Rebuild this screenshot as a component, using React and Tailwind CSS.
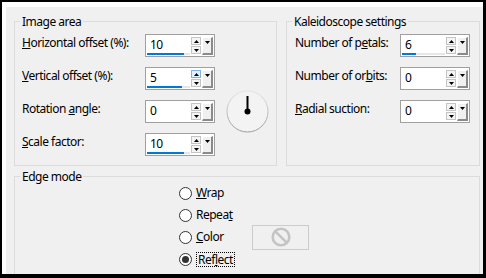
import React from 'react';

const Up = () => (
  <svg width="5" height="3" viewBox="0 0 5 3"><path d="M0 3 L2.5 0 L5 3 Z" fill="#000" /></svg>
);
const Down = () => (
  <svg width="5" height="3" viewBox="0 0 5 3"><path d="M0 0 L5 0 L2.5 3 Z" fill="#000" /></svg>
);

function SpinBox({ value, bar = 0, hot = false }) {
  return (
    <div className="flex h-[23px] w-[70px] items-center border border-[#a0a0a0] bg-white pr-[1px]">
      <div className="flex h-full w-[45px] flex-col pl-[1px] pt-[2px]">
        <div className="h-[16px] pl-[3px] leading-[16px]">{value}</div>
        {bar > 0 && (
          <div className="h-[2px] w-[43px] bg-[#e6e6e6]">
            <div className="h-full bg-[#0078d7]" style={{ width: bar }} />
          </div>
        )}
      </div>
      <div className="flex w-[10px] flex-col gap-[1px]">
        <div className={`flex h-[8px] items-center justify-center border ${hot ? 'border-[#7eb4ea] bg-[#e5f1fb]' : 'border-[#c4c4c4] bg-[#f4f4f4]'}`}>
          <Up />
        </div>
        <div className="flex h-[8px] items-center justify-center border border-[#c4c4c4] bg-[#f4f4f4]">
          <Down />
        </div>
      </div>
      <div className="ml-[1px] flex h-[18px] w-[11px] justify-center border-t border-l border-r-2 border-b-2 border-t-white border-l-white border-r-[#8a8a8a] border-b-[#8a8a8a] bg-[#f0f0f0] pt-[3px]">
        <Down />
      </div>
    </div>
  );
}

function Group({ title, className, children }) {
  return (
    <div className={`relative border border-[#dcdcdc] ${className}`}>
      <span className="absolute -top-[7px] left-[5px] bg-[#f0f0f0] px-[2px] leading-[14px]">{title}</span>
      {children}
    </div>
  );
}

function Radio({ checked, children }) {
  return (
    <div className="flex h-[22px] items-center gap-[4px]">
      <div className="flex h-[13px] w-[13px] items-center justify-center rounded-full border border-[#333333] bg-white">
        {checked && <div className="h-[7px] w-[7px] rounded-full bg-[#333333]" />}
      </div>
      {children}
    </div>
  );
}

function Dial() {
  return (
    <div className="ml-[11px] h-[23px] w-[43px]">
      <svg width="43" height="43" viewBox="0 0 43 43" className="-mt-[10px]">
        <defs>
          <linearGradient id="ring" x1="0" y1="0" x2="0" y2="1">
            <stop offset="0" stopColor="#e4e4e4" />
            <stop offset="1" stopColor="#9a9a9a" />
          </linearGradient>
        </defs>
        <circle cx="21.5" cy="21.5" r="20.5" fill="#f3f3f3" stroke="url(#ring)" strokeWidth="1" />
        <line x1="21.5" y1="21.5" x2="21.5" y2="6" stroke="#000" strokeWidth="2" />
        <circle cx="21.5" cy="21.5" r="3" fill="#000" />
      </svg>
    </div>
  );
}

export default function App() {
  return (
    <div className="h-[278px] w-[486px] overflow-hidden bg-black pt-[2px] pl-[2px] pr-[3px] pb-[4px] font-['Noto_Sans',sans-serif] text-[12px] tracking-[-0.5px] text-black">
      <div className="h-full overflow-hidden border-t-[5px] border-l-[4px] border-white bg-[#f0f0f0] pt-[14px] pl-[8px] pr-[3px]">
        <div className="flex gap-[9px]">
          <Group title="Image area" className="h-[145px] w-[263px]">
            <div className="grid grid-cols-[123px_auto] gap-y-[10px] pt-[12px] pl-[7px]">
              <div className="pt-[1px] leading-[16px]"><u>H</u>orizontal offset (%):</div>
              <SpinBox value="10" bar={37} />
              <div className="pt-[1px] leading-[16px]"><u>V</u>ertical offset (%):</div>
              <SpinBox value="5" bar={35} hot />
              <div className="pt-[1px] leading-[16px]">Rotation <u>a</u>ngle:</div>
              <div className="flex">
                <SpinBox value="0" />
                <Dial />
              </div>
              <div className="pt-[1px] leading-[16px]"><u>S</u>cale factor:</div>
              <SpinBox value="10" bar={37} />
            </div>
          </Group>
          <Group title="Kaleidoscope settings" className="h-[145px] flex-1">
            <div className="grid grid-cols-[105px_auto] gap-y-[10px] pt-[12px] pl-[8px]">
              <div className="pt-[1px] leading-[16px]">Number of p<u>e</u>tals:</div>
              <SpinBox value="6" bar={14} />
              <div className="pt-[1px] leading-[16px]">Number of or<u>b</u>its:</div>
              <SpinBox value="0" />
              <div className="pt-[1px] leading-[16px]"><u>R</u>adial suction:</div>
              <SpinBox value="0" />
            </div>
          </Group>
        </div>
        <Group title="Edge mode" className="mt-[10px] h-[120px]">
          <div className="pt-[5px] pl-[164px]">
            <Radio><span><u>W</u>rap</span></Radio>
            <Radio><span>Repea<u>t</u></span></Radio>
            <div className="grid grid-cols-[73px_auto] items-center">
              <Radio><span><u>C</u>olor</span></Radio>
              <div className="-my-[2px] flex h-[25px] w-[57px] items-center justify-center border border-[#cccccc] bg-[#f0f0f0]">
                <svg width="20" height="20" viewBox="0 0 20 20">
                  <circle cx="10" cy="10" r="8.3" fill="none" stroke="#c4c4c4" strokeWidth="2.6" />
                  <line x1="4.3" y1="4.3" x2="15.7" y2="15.7" stroke="#c4c4c4" strokeWidth="2.6" />
                </svg>
              </div>
            </div>
            <Radio checked>
              <span className="border border-dotted border-black px-[1px] leading-[13px]">Ref<u>l</u>ect</span>
            </Radio>
          </div>
        </Group>
      </div>
    </div>
  );
}
